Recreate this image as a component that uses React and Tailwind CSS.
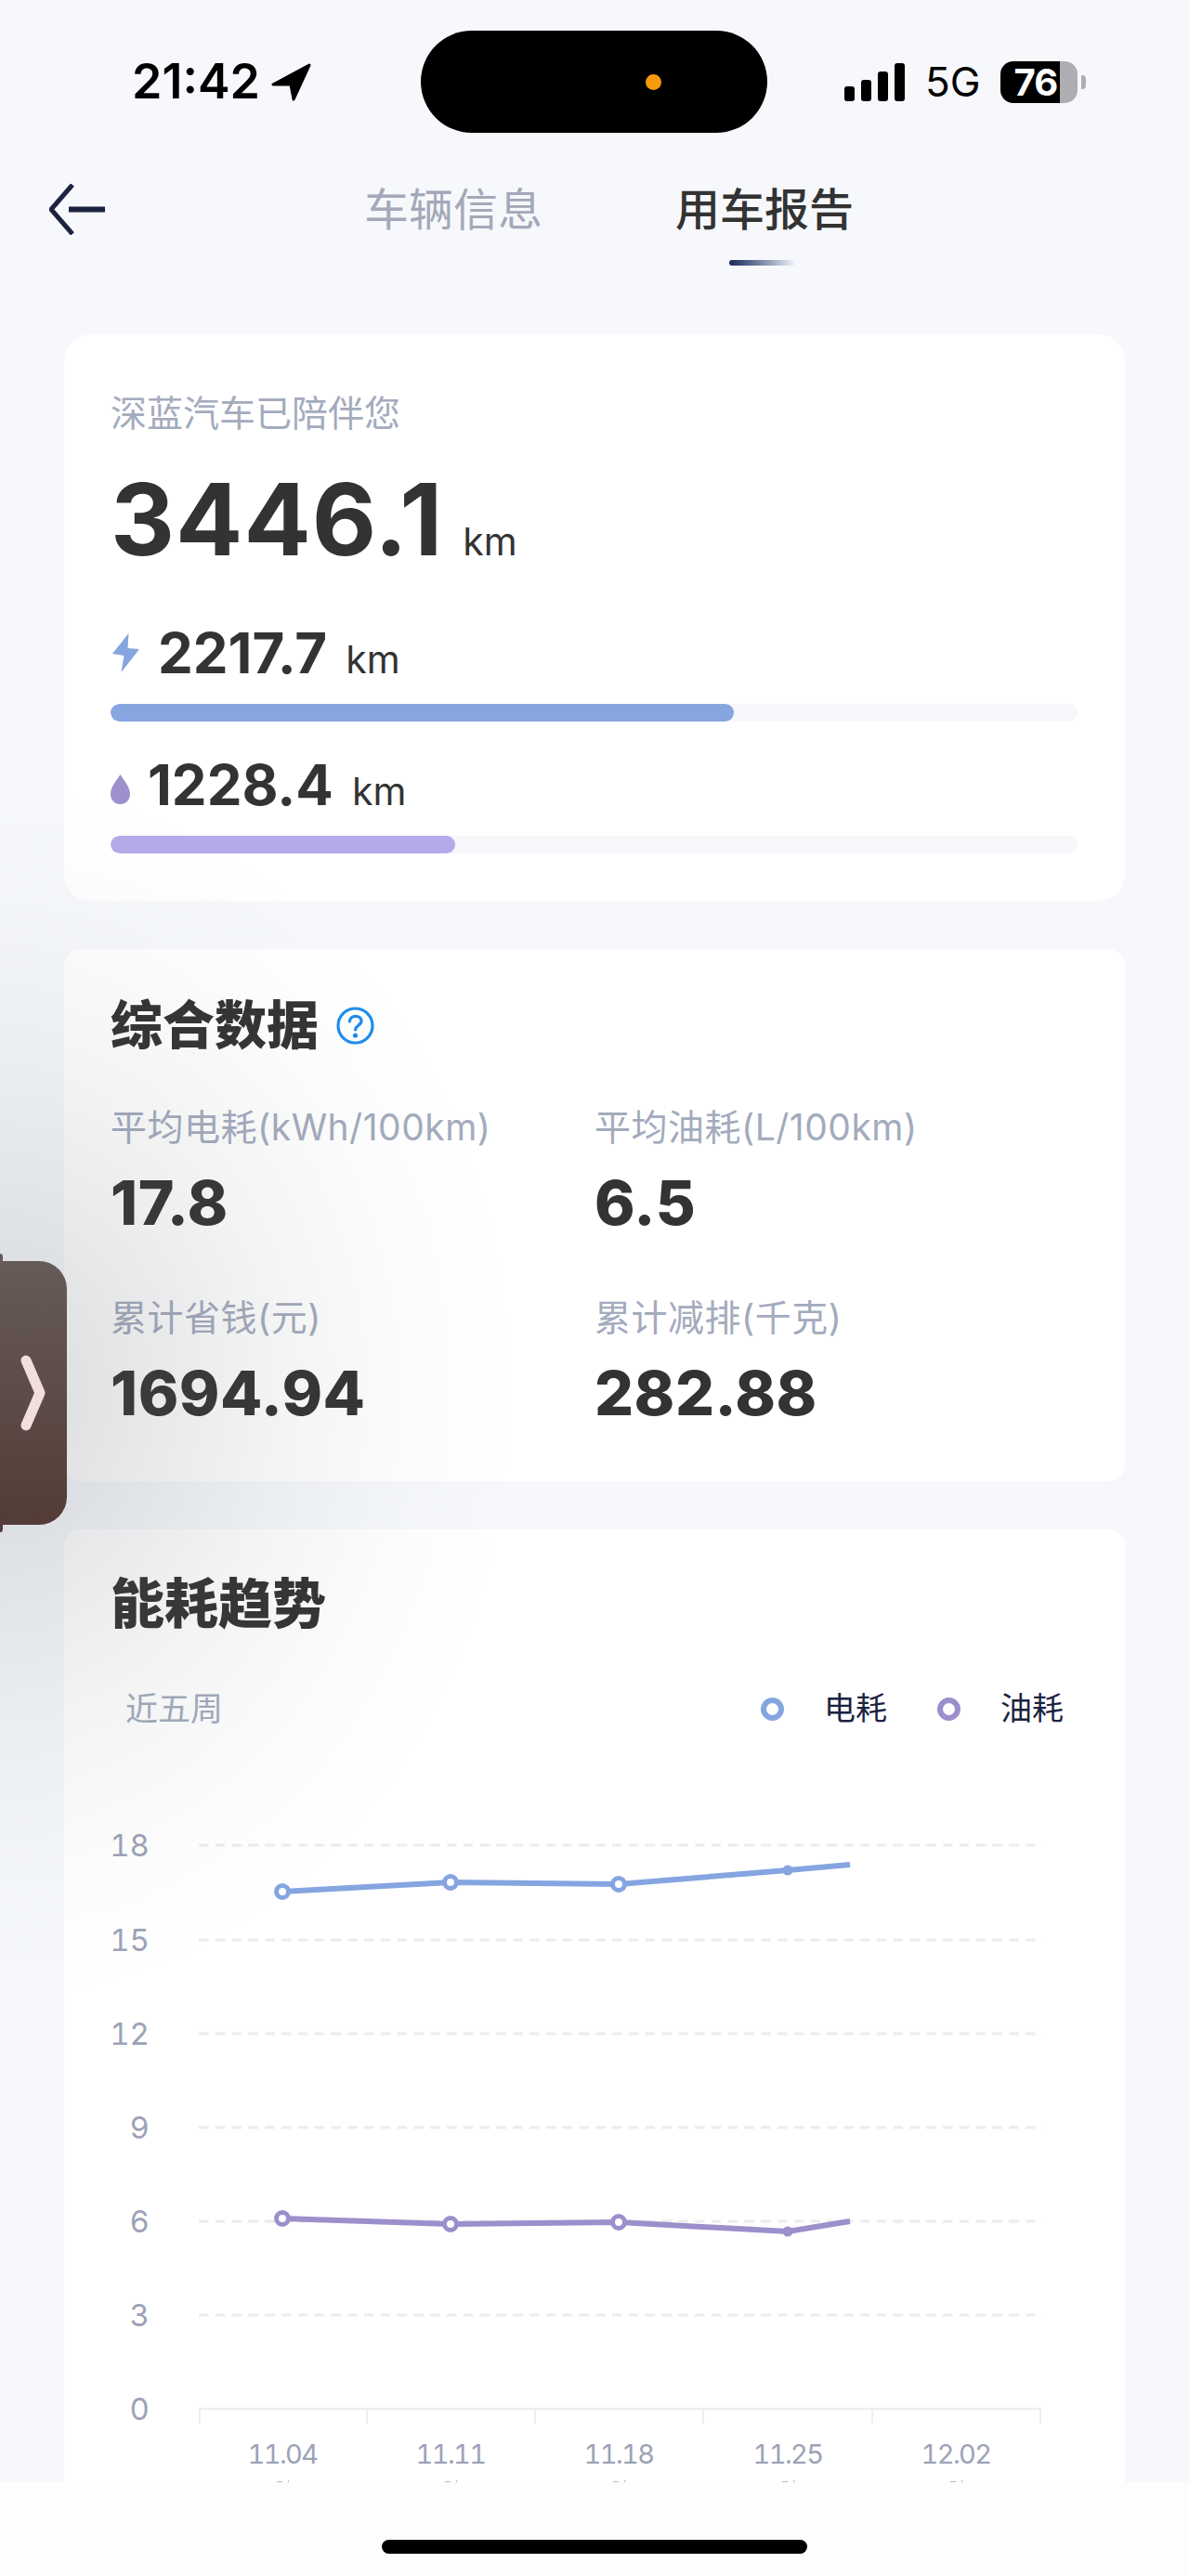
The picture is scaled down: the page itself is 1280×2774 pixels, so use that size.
const stats = [
  { label: "平均电耗(kWh/100km)", value: "17.8" },
  { label: "平均油耗(L/100km)", value: "6.5" },
  { label: "累计省钱(元)", value: "1694.94" },
  { label: "累计减排(千克)", value: "282.88" },
];

const gridY = [1987, 2089, 2190, 2291, 2392, 2493];
const yLabels = [
  { text: "18", y: 1987 },
  { text: "15", y: 2089 },
  { text: "12", y: 2190 },
  { text: "9", y: 2291 },
  { text: "6", y: 2392 },
  { text: "3", y: 2493 },
  { text: "0", y: 2594 },
];
const xTicks = [215, 395, 576, 757, 939, 1120];
const xLabels = [
  { text: "11.04", x: 304 },
  { text: "11.11", x: 485 },
  { text: "11.18", x: 666 },
  { text: "11.25", x: 848 },
  { text: "12.02", x: 1029 },
];
const electric = [[304, 2037], [485, 2027], [666, 2029], [848, 2014], [915, 2008]];
const fuel = [[304, 2389], [485, 2395], [666, 2393], [848, 2403], [915, 2392]];

function Line({ points, color }) {
  return (
    <g>
      <polyline points={points.map((p) => p.join(",")).join(" ")} fill="none" stroke={color} strokeWidth="6" />
      {points.slice(0, 3).map(([x, y]) => (
        <circle key={x} cx={x} cy={y} r="6.5" fill="#fff" stroke={color} strokeWidth="5" />
      ))}
      <circle cx={points[3][0]} cy={points[3][1]} r="5.5" fill={color} />
    </g>
  );
}

function Chart() {
  return (
    <svg viewBox="69 1960 1142 720" className="block w-[1142px] h-[720px] mt-[103px]">
      {gridY.map((y) => (
        <line key={y} x1="214" x2="1122" y1={y} y2={y} stroke="#ececec" strokeWidth="3" strokeDasharray="10.5 7.3" />
      ))}
      {yLabels.map((l) => (
        <text key={l.text} x="161" y={l.y + 12} textAnchor="end" fontSize="33" fill="#9ca3b6" fontFamily="Inter, sans-serif" className="tabular-nums">
          {l.text}
        </text>
      ))}
      <line x1="214" x2="1121" y1="2594" y2="2594" stroke="#eeeeef" strokeWidth="2.5" />
      {xTicks.map((x) => (
        <line key={x} x1={x} x2={x} y1="2594" y2="2610" stroke="#eeeeef" strokeWidth="2" />
      ))}
      {xLabels.map((l) => (
        <g key={l.text}>
          <text x={l.x} y="2653" textAnchor="middle" fontSize="29" letterSpacing="-1.6" fill="#9ca3b6" fontFamily="Inter, sans-serif" className="tabular-nums">
            {l.text}
          </text>
          <path d={`M${l.x - 6} 2672.5h6M${l.x + 7} 2671l-1 2.5`} stroke="#b4b9c6" strokeWidth="1.2" fill="none" />
        </g>
      ))}
      <Line points={electric} color="#85a5e0" />
      <Line points={fuel} color="#9c8fcc" />
    </svg>
  );
}

function StatusBar() {
  return (
    <div className="flex items-center h-[110px] mt-[33px] pl-[142px]">
      <div className="flex items-center w-[311px]">
        <span className="text-[52px] leading-[50px] font-semibold text-black">21:42</span>
        <svg viewBox="0 0 43 41" className="w-[43px] h-[41px] ml-[12px]">
          <path d="M41 2 L2 23 L21 23 L24 39 Z" fill="#000" stroke="#000" strokeWidth="3" strokeLinejoin="round" />
        </svg>
      </div>
      <div className="relative w-[373px] h-[110px] rounded-[55px] bg-black">
        <div className="absolute left-[242px] top-[47px] w-[17px] h-[17px] rounded-full bg-[#f59a0c]" />
      </div>
      <div className="flex items-end gap-[7px] ml-[83px] h-[41px]">
        <div className="w-[11px] h-[16px] rounded-[3px] bg-black" />
        <div className="w-[11px] h-[23px] rounded-[3px] bg-black" />
        <div className="w-[11px] h-[32px] rounded-[3px] bg-black" />
        <div className="w-[11px] h-[41px] rounded-[3px] bg-black" />
      </div>
      <span className="ml-[22px] text-[44px] leading-[44px] font-normal text-black">5G</span>
      <div className="flex items-center ml-[21px]">
        <div className="w-[83px] h-[45px] pl-[15px] rounded-[14px] bg-[linear-gradient(90deg,#000_64px,#aeaeb2_64px)]">
          <span className="block text-[40px] leading-[45px] font-bold text-white tracking-[-1px]">76</span>
        </div>
        <div className="w-[5px] h-[15px] ml-[4px] rounded-r-[4px] bg-[#aeaeb2]" />
      </div>
    </div>
  );
}

function Header() {
  return (
    <div>
      <div className="flex items-center h-[109px] mt-[28px] pl-[53px]">
        <svg viewBox="0 0 60 55" className="w-[60px] h-[55px] shrink-0">
          <path d="M25 1 L2 27.5 L25 54" fill="none" stroke="#1b2340" strokeWidth="5" />
          <path d="M21 27.5 H60" fill="none" stroke="#1b2340" strokeWidth="6" />
        </svg>
        <span className="ml-[279px] text-[48px] leading-[50px] text-[#a3a9b8]">车辆信息</span>
        <span className="ml-[143px] text-[48px] leading-[50px] font-medium text-[#333333]">用车报告</span>
      </div>
      <div className="ml-[785px] w-[72px] h-[6px] rounded-l-[3px] bg-gradient-to-r from-[#1b2a5c] to-[#f6f8fc]" />
    </div>
  );
}

function MileageRow({ icon, value, barClass, barWidth }) {
  return (
    <div>
      <div className="flex items-baseline h-[60px]">
        <span className="self-center">{icon}</span>
        <span className="text-[60px] leading-[60px] font-bold text-[#333333]">{value}</span>
        <span className="ml-[20px] text-[41px] leading-[60px] text-[#333333]">km</span>
      </div>
      <div className="mt-[25px] h-[19px] rounded-full bg-[#f6f7fb] overflow-hidden">
        <div className={`h-full rounded-full ${barClass}`} style={{ width: barWidth }} />
      </div>
    </div>
  );
}

function MileageCard() {
  return (
    <div className="mt-[74px] mx-[69px] h-[610px] pt-[63px] pl-[50px] pr-[51px] rounded-[28px] bg-white">
      <div className="text-[39px] leading-[44px] text-[#a3abbd]">深蓝汽车已陪伴您</div>
      <div className="flex items-baseline mt-[39px] h-[107px]">
        <span className="text-[107px] leading-[107px] font-bold tracking-[1px] text-[#333333]">3446.1</span>
        <span className="ml-[21px] text-[41px] leading-[60px] text-[#333333]">km</span>
      </div>
      <div className="mt-[60px]">
        <MileageRow
          icon={
            <svg viewBox="0 0 29 42" className="w-[29px] h-[42px] ml-[2px] mr-[20px]">
              <path d="M17.5 0 L0 22 L12.5 24 L9.5 42 L29 17 L16.5 16 Z" fill="#85a5e0" />
            </svg>
          }
          value="2217.7"
          barClass="bg-[#87a5e0]"
          barWidth="671px"
        />
      </div>
      <div className="mt-[38px]">
        <MileageRow
          icon={
            <svg viewBox="0 0 21 32" className="w-[21px] h-[32px] mt-[10px] mr-[19px]">
              <path d="M10.5 0 C7 6 0 13 0 21 C0 27.5 4.5 32 10.5 32 C16.5 32 21 27.5 21 21 C21 13 14 6 10.5 0Z" fill="#9d90cc" />
            </svg>
          }
          value="1228.4"
          barClass="bg-[#b5a9ea]"
          barWidth="371px"
        />
      </div>
    </div>
  );
}

function StatsCard() {
  return (
    <div className="mt-[52px] mx-[69px] h-[573px] pt-[55px] pl-[50px] rounded-[18px] bg-white">
      <div className="flex items-center h-[55px]">
        <span className="text-[56px] leading-[55px] font-black text-[#333333]">综合数据</span>
        <svg viewBox="0 0 41 41" className="w-[41px] h-[41px] ml-[19px]">
          <circle cx="20.5" cy="20.5" r="18.5" fill="none" stroke="#1f8ceb" strokeWidth="3.2" />
          <path d="M14.5 16 C14.5 8.5 27 8.5 27 15.5 C27 20 21 20 20.5 25" fill="none" stroke="#1f8ceb" strokeWidth="3.2" strokeLinecap="round" />
          <circle cx="20.5" cy="31" r="2.6" fill="#1f8ceb" />
        </svg>
      </div>
      <div className="grid grid-cols-[521px_1fr] mt-[62px] gap-y-[70px]">
        {stats.map((s) => (
          <div key={s.label}>
            <div className="text-[39px] leading-[40px] tracking-[0.5px] text-[#a3abbd]">{s.label}</div>
            <div className="mt-[27px] text-[66px] leading-[68px] font-extrabold tracking-[0.5px] text-[#333333]">{s.value}</div>
          </div>
        ))}
      </div>
    </div>
  );
}

function TrendCard() {
  return (
    <div className="mt-[52px] mx-[69px] h-[1100px] pt-[53px] rounded-[18px] bg-white">
      <div className="pl-[50px] text-[58px] leading-[55px] font-black text-[#333333]">能耗趋势</div>
      <div className="flex items-center justify-between mt-[68px] h-[34px] pl-[66px] pr-[66px]">
        <span className="text-[35px] leading-[34px] text-[#a3abbd]">近五周</span>
        <div className="flex items-center">
          <div className="w-[25px] h-[25px] rounded-full border-[6px] border-[#85a5e0]" />
          <span className="ml-[43px] text-[34px] leading-[34px] text-[#1b2340]">电耗</span>
          <div className="ml-[54px] w-[25px] h-[25px] rounded-full border-[6px] border-[#9c8fcc]" />
          <span className="ml-[43px] text-[34px] leading-[34px] text-[#1b2340]">油耗</span>
        </div>
      </div>
      <Chart />
    </div>
  );
}

export default function App() {
  return (
    <div className="relative w-[1280px] h-[2774px] overflow-hidden bg-[#f6f8fc] font-['Inter','Noto_Sans_CJK_SC',sans-serif]">
      <div className="flow-root">
        <StatusBar />
        <Header />
        <MileageCard />
        <StatsCard />
        <TrendCard />
      </div>

      {/* grey glow the floating handle throws over the page */}
      <div className="absolute left-[-560px] top-[840px] w-[1120px] h-[1320px] pointer-events-none bg-[radial-gradient(closest-side,rgba(95,100,108,0.23)_0%,rgba(95,100,108,0.14)_30%,rgba(95,100,108,0.07)_55%,rgba(95,100,108,0.02)_80%,rgba(95,100,108,0)_100%)]" />

      <div className="absolute left-0 top-[1350px] w-[3px] h-[10px] rounded-r-[3px] bg-[#665a57]" />
      <div className="absolute left-0 top-[1640px] w-[3px] h-[10px] rounded-r-[3px] bg-[#533d38]" />
      <div className="absolute left-0 top-[1358px] w-[72px] h-[284px] flex items-center rounded-r-[30px] bg-gradient-to-b from-[#665b58] to-[#533c37]">
        <svg viewBox="0 0 32 82" className="w-[32px] h-[82px] ml-[19px]">
          <path d="M9 6 L24 41 L9 76" fill="none" stroke="#f2dede" strokeWidth="11" strokeLinecap="round" strokeLinejoin="round" />
        </svg>
      </div>

      <div className="absolute left-0 right-0 bottom-0 h-[101px] pt-[62px] bg-[#fdfdfe]">
        <div className="mx-auto w-[458px] h-[15px] rounded-full bg-black" />
      </div>
    </div>
  );
}
